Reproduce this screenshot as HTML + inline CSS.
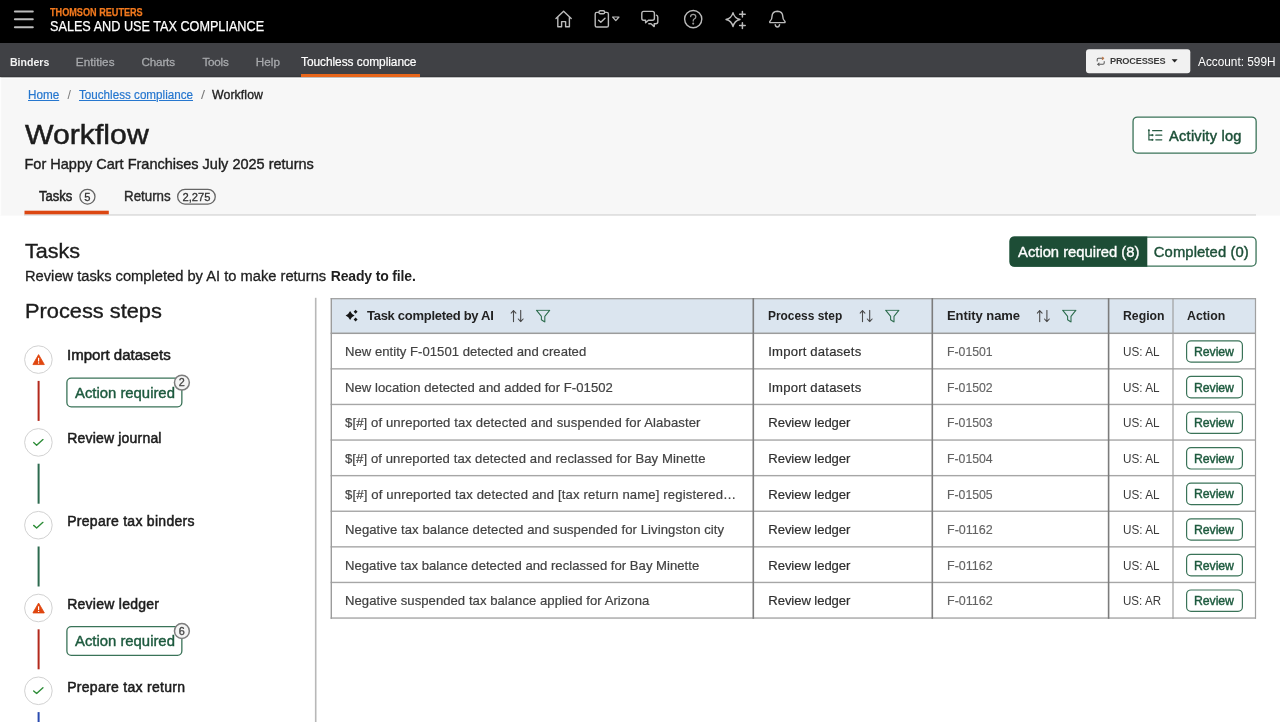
<!DOCTYPE html>
<html>
<head>
<meta charset="utf-8">
<title>Workflow</title>
<style>
*{box-sizing:border-box;margin:0;padding:0}
html,body{width:1280px;height:722px;overflow:hidden;background:#fff}
body{font-family:"Liberation Sans",sans-serif;position:relative}
.t{position:absolute;white-space:pre;font-family:"Liberation Sans",sans-serif}
.b{position:absolute;display:block}
#txt{position:absolute;left:0;top:0;width:1280px;height:722px;will-change:transform;opacity:0.999}
</style>
</head>
<body>
<svg class="b" style="left:0;top:0" width="1280" height="722" viewBox="0 0 1280 722">
<rect x="0.00" y="0.00" width="1280.00" height="43.00" fill="#000"/>
<rect x="0.00" y="43.00" width="1280.00" height="34.60" fill="#404145"/>
<rect x="0.00" y="75.80" width="1280.00" height="1.80" fill="#38393c"/>
<rect x="0.00" y="77.60" width="1280.00" height="138.00" fill="#f7f7f7"/>
<rect x="0.00" y="77.60" width="1280.00" height="1.10" fill="#fefefe"/>
<rect x="0.00" y="77.60" width="1.20" height="138.00" fill="#fdfdfd"/>
<rect x="13.90" y="10.40" width="19.90" height="2.00" rx="1.00" fill="#bdbdbd"/>
<rect x="13.90" y="18.30" width="19.90" height="2.00" rx="1.00" fill="#bdbdbd"/>
<rect x="13.90" y="26.20" width="19.90" height="2.00" rx="1.00" fill="#bdbdbd"/>
<rect x="301.00" y="74.00" width="119.00" height="3.00" fill="#e8661b"/>
<rect x="1086.00" y="49.30" width="104.30" height="24.00" rx="3.00" fill="#f1f1f1"/>
<path d="M1171.6 59.2H1177.6L1174.6 62.6Z" fill="#222" />
<rect x="79.95" y="189.35" width="15.00" height="14.70" rx="7.35" fill="#f7f7f7" stroke="#666" stroke-width="1.3"/>
<rect x="177.65" y="189.35" width="37.60" height="14.70" rx="7.35" fill="#f7f7f7" stroke="#666" stroke-width="1.3"/>
<rect x="24.00" y="214.00" width="1232.00" height="1.80" fill="#e0e0e0"/>
<rect x="24.50" y="210.70" width="84.30" height="3.60" fill="#dc4712"/>
<rect x="1133.05" y="117.05" width="123.10" height="36.10" rx="4.35" fill="#fff" stroke="#3a7358" stroke-width="1.3"/>
<rect x="1010.15" y="237.15" width="245.90" height="29.00" rx="4.35" fill="#fff" stroke="#3a7358" stroke-width="1.3"/>
<path d="M1147.3 236.5 V266.8 H1014.5 Q1009.5 266.8 1009.5 261.8 V241.5 Q1009.5 236.5 1014.5 236.5 Z" fill="#1d4d36" />
<rect x="314.90" y="297.80" width="1.60" height="425.00" fill="#b8b8b8"/>
<rect x="37.60" y="380.90" width="2.00" height="40.00" fill="#b3291c"/>
<rect x="24.60" y="345.80" width="27.60" height="27.60" rx="13.80" fill="#fff" stroke="#d2d2d2" stroke-width="1"/>
<svg x="32.3" y="354.0" width="12.6" height="11.2" viewBox="0 0 126 112"><path d="M63 6 L120 104 Q122 108 117 108 H9 Q4 108 6 104 Z" fill="#e0460f" stroke="#e0460f" stroke-width="8" stroke-linejoin="round"/><rect x="57" y="38" width="12" height="38" rx="3" fill="#fff"/><circle cx="63" cy="90" r="7" fill="#fff"/></svg>
<rect x="66.90" y="378.20" width="114.95" height="28.70" rx="4.35" fill="#fff" stroke="#3a7358" stroke-width="1.3"/>
<rect x="174.45" y="375.15" width="14.90" height="14.90" rx="7.45" fill="#f4f4f4" stroke="#7c7c7c" stroke-width="1.5"/>
<rect x="37.60" y="463.70" width="2.00" height="40.00" fill="#2c6a4f"/>
<rect x="24.60" y="428.60" width="27.60" height="27.60" rx="13.80" fill="#fff" stroke="#d2d2d2" stroke-width="1"/>
<svg x="32.6" y="438.7" width="11.4" height="7.4" viewBox="0 0 116 80"><path d="M8 42 L40 70 L108 8" fill="none" stroke="#2e8d38" stroke-width="15" stroke-linecap="round" stroke-linejoin="round"/></svg>
<rect x="37.60" y="546.50" width="2.00" height="40.00" fill="#2c6a4f"/>
<rect x="24.60" y="511.40" width="27.60" height="27.60" rx="13.80" fill="#fff" stroke="#d2d2d2" stroke-width="1"/>
<svg x="32.6" y="521.5" width="11.4" height="7.4" viewBox="0 0 116 80"><path d="M8 42 L40 70 L108 8" fill="none" stroke="#2e8d38" stroke-width="15" stroke-linecap="round" stroke-linejoin="round"/></svg>
<rect x="37.60" y="629.30" width="2.00" height="40.00" fill="#b3291c"/>
<rect x="24.60" y="594.20" width="27.60" height="27.60" rx="13.80" fill="#fff" stroke="#d2d2d2" stroke-width="1"/>
<svg x="32.3" y="602.4" width="12.6" height="11.2" viewBox="0 0 126 112"><path d="M63 6 L120 104 Q122 108 117 108 H9 Q4 108 6 104 Z" fill="#e0460f" stroke="#e0460f" stroke-width="8" stroke-linejoin="round"/><rect x="57" y="38" width="12" height="38" rx="3" fill="#fff"/><circle cx="63" cy="90" r="7" fill="#fff"/></svg>
<rect x="66.90" y="626.60" width="114.95" height="28.70" rx="4.35" fill="#fff" stroke="#3a7358" stroke-width="1.3"/>
<rect x="174.45" y="623.55" width="14.90" height="14.90" rx="7.45" fill="#f4f4f4" stroke="#7c7c7c" stroke-width="1.5"/>
<rect x="37.60" y="712.10" width="2.00" height="40.00" fill="#2a4bb0"/>
<rect x="24.60" y="677.00" width="27.60" height="27.60" rx="13.80" fill="#fff" stroke="#d2d2d2" stroke-width="1"/>
<svg x="32.6" y="687.1" width="11.4" height="7.4" viewBox="0 0 116 80"><path d="M8 42 L40 70 L108 8" fill="none" stroke="#2e8d38" stroke-width="15" stroke-linecap="round" stroke-linejoin="round"/></svg>
<rect x="331.00" y="298.30" width="925.00" height="34.80" fill="#dbe5ef"/>
<rect x="330.60" y="298.10" width="925.40" height="1.20" fill="#9c9c9c"/>
<rect x="330.60" y="332.55" width="925.40" height="1.50" fill="#9c9c9c"/>
<rect x="330.60" y="368.15" width="925.40" height="1.40" fill="#a6a6a6"/>
<rect x="330.60" y="403.75" width="925.40" height="1.40" fill="#a6a6a6"/>
<rect x="330.60" y="439.35" width="925.40" height="1.40" fill="#a6a6a6"/>
<rect x="330.60" y="474.95" width="925.40" height="1.40" fill="#a6a6a6"/>
<rect x="330.60" y="510.55" width="925.40" height="1.40" fill="#a6a6a6"/>
<rect x="330.60" y="546.15" width="925.40" height="1.40" fill="#a6a6a6"/>
<rect x="330.60" y="581.75" width="925.40" height="1.40" fill="#a6a6a6"/>
<rect x="330.60" y="617.35" width="925.40" height="1.40" fill="#a6a6a6"/>
<rect x="330.60" y="298.10" width="1.40" height="320.70" fill="#9c9c9c"/>
<rect x="752.50" y="298.10" width="1.60" height="320.70" fill="#7c7c7c"/>
<rect x="931.50" y="298.10" width="1.60" height="320.70" fill="#7c7c7c"/>
<rect x="1107.80" y="298.10" width="1.60" height="320.70" fill="#7c7c7c"/>
<rect x="1172.40" y="298.10" width="1.20" height="320.70" fill="#a0a0a0"/>
<rect x="1254.90" y="298.10" width="1.20" height="320.70" fill="#a0a0a0"/>
<path d="M350.1 311.1 Q351.45 314.25 354.6 315.6 Q351.45 316.95 350.1 320.1 Q348.75 316.95 345.6 315.6 Q348.75 314.25 350.1 311.1Z" fill="#161616" />
<path d="M355.6 309.7 Q356.50 310.80 357.6 311.7 Q356.50 312.60 355.6 313.7 Q354.70 312.60 353.6 311.7 Q354.70 310.80 355.6 309.7Z" fill="#161616" />
<path d="M355.6 317.6 Q356.50 318.70 357.6 319.6 Q356.50 320.50 355.6 321.6 Q354.70 320.50 353.6 319.6 Q354.70 318.70 355.6 317.6Z" fill="#161616" />
<svg x="510.3" y="309.8" width="14.4" height="12.6" viewBox="0 0 144 126"><g fill="none" stroke="#4a4a4a" stroke-width="11" stroke-linecap="round" stroke-linejoin="round"><path d="M32 120V8M8 34L32 8L56 34"/><path d="M104 6V118M80 92L104 118L128 92"/></g></svg>
<svg x="535.6" y="309.4" width="15" height="13.4" viewBox="0 0 150 134"><path d="M8 8H142L92 70V126L58 104V70Z" fill="none" stroke="#2f6e50" stroke-width="11" stroke-linejoin="round"/></svg>
<svg x="859.3" y="309.8" width="14.4" height="12.6" viewBox="0 0 144 126"><g fill="none" stroke="#4a4a4a" stroke-width="11" stroke-linecap="round" stroke-linejoin="round"><path d="M32 120V8M8 34L32 8L56 34"/><path d="M104 6V118M80 92L104 118L128 92"/></g></svg>
<svg x="884.8" y="309.4" width="15" height="13.4" viewBox="0 0 150 134"><path d="M8 8H142L92 70V126L58 104V70Z" fill="none" stroke="#2f6e50" stroke-width="11" stroke-linejoin="round"/></svg>
<svg x="1036.5" y="309.8" width="14.4" height="12.6" viewBox="0 0 144 126"><g fill="none" stroke="#4a4a4a" stroke-width="11" stroke-linecap="round" stroke-linejoin="round"><path d="M32 120V8M8 34L32 8L56 34"/><path d="M104 6V118M80 92L104 118L128 92"/></g></svg>
<svg x="1061.8" y="309.4" width="15" height="13.4" viewBox="0 0 150 134"><path d="M8 8H142L92 70V126L58 104V70Z" fill="none" stroke="#2f6e50" stroke-width="11" stroke-linejoin="round"/></svg>
<rect x="1186.60" y="340.80" width="55.80" height="21.40" rx="4.40" fill="#fff" stroke="#3a7358" stroke-width="1.2"/>
<rect x="1186.60" y="376.40" width="55.80" height="21.40" rx="4.40" fill="#fff" stroke="#3a7358" stroke-width="1.2"/>
<rect x="1186.60" y="412.00" width="55.80" height="21.40" rx="4.40" fill="#fff" stroke="#3a7358" stroke-width="1.2"/>
<rect x="1186.60" y="447.60" width="55.80" height="21.40" rx="4.40" fill="#fff" stroke="#3a7358" stroke-width="1.2"/>
<rect x="1186.60" y="483.20" width="55.80" height="21.40" rx="4.40" fill="#fff" stroke="#3a7358" stroke-width="1.2"/>
<rect x="1186.60" y="518.80" width="55.80" height="21.40" rx="4.40" fill="#fff" stroke="#3a7358" stroke-width="1.2"/>
<rect x="1186.60" y="554.40" width="55.80" height="21.40" rx="4.40" fill="#fff" stroke="#3a7358" stroke-width="1.2"/>
<rect x="1186.60" y="590.00" width="55.80" height="21.40" rx="4.40" fill="#fff" stroke="#3a7358" stroke-width="1.2"/>
<svg x="540" y="0" width="260" height="43" viewBox="540 0 260 43" fill="none" stroke="#bcbcbc" stroke-width="1.4" stroke-linecap="round" stroke-linejoin="round"><path d="M556 18.6 L563.6 11.2 L571.2 18.6"/><path d="M557.8 17.4 V26.8 H561.6 V21.6 H565.6 V26.8 H569.4 V17.4"/><rect x="595.2" y="12.4" width="13.2" height="14.6" rx="1.6"/><rect x="599" y="10.8" width="5.6" height="3" rx="1.3" fill="#000"/><path d="M598.6 20.2 L600.8 22.2 L605 18.2"/><path d="M612.6 17 H619 L615.8 20.6 Z" stroke-width="1.2"/><path d="M643.6 11.4 H652.4 Q654.4 11.4 654.4 13.4 V18.2 Q654.4 20.2 652.4 20.2 H648.4 L645.6 22.8 V20.2 H643.6 Q641.8 20.2 641.8 18.2 V13.4 Q641.8 11.4 643.6 11.4 Z"/><path d="M656.4 15.2 Q657.8 15.6 657.8 17.2 V21.8 Q657.8 23.8 655.8 23.8 H654.2 V26.6 L651 23.8 H648.8"/><circle cx="693.2" cy="19.1" r="8.6"/><path d="M690.6 16.6 Q690.7 14.4 693.2 14.4 Q695.8 14.4 695.8 16.7 Q695.8 18.2 694.2 19 Q693.2 19.6 693.2 21" stroke-width="1.3" stroke="#9a9a9a"/><circle cx="693.2" cy="23.6" r="0.5" stroke="#9a9a9a" stroke-width="1.1"/><path d="M733 12.6 Q734.4 18.2 740 19.5 Q734.4 20.8 733 26.6 Q731.6 20.8 726 19.5 Q731.6 18.2 733 12.6 Z" stroke-width="1.4"/><path d="M742.4 11.4 V17 M739.6 14.2 H745.2" stroke-width="1.5"/><path d="M742.4 22.8 V28.4 M739.6 25.6 H745.2" stroke-width="1.5"/><path d="M770 22.6 H784.8 Q785.6 22 784.6 21 Q782.8 19.4 782.8 16.4 Q782.6 11.4 777.4 11.2 Q772.2 11.4 772 16.4 Q772 19.4 770.2 21 Q769.2 22 770 22.6 Z"/><path d="M775.2 24.6 Q775.6 27 777.4 27 Q779.2 27 779.6 24.6"/></svg>
<svg x="1096" y="56.6" width="9.4" height="9.4" viewBox="0 0 110 110" fill="none" stroke="#5a5a5a" stroke-width="12" stroke-linecap="round" stroke-linejoin="round"><path d="M14 52 V34 Q14 20 28 20 H86"/><path d="M74 6 L90 20 L74 34" stroke="#c77a45"/><path d="M96 58 V76 Q96 90 82 90 H24"/><path d="M36 76 L20 90 L36 104"/></svg>
<svg x="1146" y="128" width="18" height="15" viewBox="1146 128 18 15" fill="none" stroke="#2a5d45" stroke-width="1.2" stroke-linecap="round"><path d="M1148.9 130.4 V139.8 H1151.6 M1148.9 135.2 H1151.6"/><circle cx="1148.9" cy="130.2" r="1" fill="#2a5d45" stroke="none"/><circle cx="1152.4" cy="135.2" r="1.1" fill="#2a5d45" stroke="none"/><circle cx="1152.4" cy="139.8" r="1.1" fill="#2a5d45" stroke="none"/><path d="M1152.6 130.7 H1161.8 M1155.8 135.2 H1161.8 M1155.8 139.8 H1161.8"/></svg>
</svg>
<div id="txt">
<div class="t" style="left:50.40px;top:7.00px;font-size:10.6px;line-height:10.6px;color:#f37a1f;font-weight:700;transform:scaleX(0.8606);transform-origin:0 0;-webkit-text-stroke:0.25px #f37a1f">THOMSON REUTERS</div>
<div class="t" style="left:50.40px;top:19.00px;font-size:14px;line-height:14px;color:#ffffff;transform:scaleX(0.9042);transform-origin:0 0;-webkit-text-stroke:0.25px #fff">SALES AND USE TAX COMPLIANCE</div>
<div class="t" style="left:10.00px;top:56.00px;font-size:11.7px;line-height:11.7px;color:#f4f4f4;font-weight:700;transform:scaleX(0.9031);transform-origin:0 0;">Binders</div>
<div class="t" style="left:75.80px;top:56.00px;font-size:11.7px;line-height:11.7px;color:#a8aaad;letter-spacing:0.053px;-webkit-text-stroke:0.3px #a8aaad">Entities</div>
<div class="t" style="left:141.50px;top:56.00px;font-size:11.7px;line-height:11.7px;color:#a8aaad;letter-spacing:-0.188px;-webkit-text-stroke:0.3px #a8aaad">Charts</div>
<div class="t" style="left:202.50px;top:56.00px;font-size:11.7px;line-height:11.7px;color:#a8aaad;letter-spacing:-0.249px;-webkit-text-stroke:0.3px #a8aaad">Tools</div>
<div class="t" style="left:255.80px;top:56.00px;font-size:11.7px;line-height:11.7px;color:#a8aaad;letter-spacing:0.051px;-webkit-text-stroke:0.3px #a8aaad">Help</div>
<div class="t" style="left:301.00px;top:57.00px;font-size:11.9px;line-height:11.9px;color:#ffffff;letter-spacing:-0.044px;-webkit-text-stroke:0.2px #fff">Touchless compliance</div>
<div class="t" style="left:1110.00px;top:57.00px;font-size:9.2px;line-height:9.2px;color:#3a3a3a;font-weight:700;letter-spacing:-0.198px;">PROCESSES</div>
<div class="t" style="left:1197.60px;top:56.00px;font-size:12.5px;line-height:12.5px;color:#ffffff;transform:scaleX(0.9451);transform-origin:0 0;">Account: 599H</div>
<div class="t" style="left:28.00px;top:89.00px;font-size:12.3px;line-height:12.3px;color:#2677cf;transform:scaleX(0.9509);transform-origin:0 0;text-decoration:underline;-webkit-text-stroke:0.2px #2677cf">Home</div>
<div class="t" style="left:67.50px;top:89.00px;font-size:12.3px;line-height:12.3px;color:#7a7a7a;letter-spacing:0.078px;">/</div>
<div class="t" style="left:79.00px;top:89.00px;font-size:12.3px;line-height:12.3px;color:#2677cf;transform:scaleX(0.9477);transform-origin:0 0;text-decoration:underline;-webkit-text-stroke:0.2px #2677cf">Touchless compliance</div>
<div class="t" style="left:201.00px;top:89.00px;font-size:12.3px;line-height:12.3px;color:#7a7a7a;transform:scaleX(1.1689);transform-origin:0 0;">/</div>
<div class="t" style="left:212.00px;top:89.00px;font-size:12.3px;line-height:12.3px;color:#1f1f1f;letter-spacing:0.094px;-webkit-text-stroke:0.35px #1f1f1f">Workflow</div>
<div class="t" style="left:25.00px;top:121.00px;font-size:27.8px;line-height:27.8px;color:#1c1c1c;transform:scaleX(1.0872);transform-origin:0 0;-webkit-text-stroke:0.5px #1c1c1c">Workflow</div>
<div class="t" style="left:24.50px;top:157.00px;font-size:14.5px;line-height:14.5px;color:#1f1f1f;-webkit-text-stroke:0.4px #1f1f1f">For Happy Cart Franchises July 2025 returns</div>
<div class="t" style="left:39.40px;top:189.00px;font-size:14px;line-height:14px;color:#1f1f1f;transform:scaleX(0.9302);transform-origin:0 0;-webkit-text-stroke:0.5px #1f1f1f">Tasks</div>
<div class="t" style="left:84.30px;top:192.00px;font-size:11.2px;line-height:11.2px;color:#333;-webkit-text-stroke:0.3px #333">5</div>
<div class="t" style="left:123.70px;top:189.00px;font-size:14px;line-height:14px;color:#2a2a2a;transform:scaleX(0.9525);transform-origin:0 0;-webkit-text-stroke:0.4px #2a2a2a">Returns</div>
<div class="t" style="left:182.40px;top:192.00px;font-size:11.2px;line-height:11.2px;color:#333;letter-spacing:0.025px;-webkit-text-stroke:0.3px #333">2,275</div>
<div class="t" style="left:1169.10px;top:129.00px;font-size:14.6px;line-height:14.6px;color:#1d5038;letter-spacing:0.232px;-webkit-text-stroke:0.45px #1d5038">Activity log</div>
<div class="t" style="left:24.70px;top:241.00px;font-size:20.2px;line-height:20.2px;color:#1c1c1c;transform:scaleX(1.0676);transform-origin:0 0;-webkit-text-stroke:0.35px #1c1c1c">Tasks</div>
<div class="t" style="left:24.70px;top:269.00px;font-size:14px;line-height:14px;color:#1f1f1f;transform:scaleX(1.0490);transform-origin:0 0;-webkit-text-stroke:0.3px #1f1f1f">Review tasks completed by AI to make returns</div>
<div class="t" style="left:330.70px;top:269.00px;font-size:14px;line-height:14px;color:#1f1f1f;font-weight:700;letter-spacing:-0.157px;">Ready to file.</div>
<div class="t" style="left:1018.10px;top:245.00px;font-size:14.8px;line-height:14.8px;color:#ffffff;letter-spacing:-0.024px;-webkit-text-stroke:0.35px #fff">Action required (8)</div>
<div class="t" style="left:1153.80px;top:245.00px;font-size:14.8px;line-height:14.8px;color:#1d5038;letter-spacing:0.095px;-webkit-text-stroke:0.4px #1d5038">Completed (0)</div>
<div class="t" style="left:24.70px;top:301.00px;font-size:20.4px;line-height:20.4px;color:#1c1c1c;transform:scaleX(1.0690);transform-origin:0 0;-webkit-text-stroke:0.35px #1c1c1c">Process steps</div>
<div class="t" style="left:67.20px;top:348.00px;font-size:14px;line-height:14px;color:#1c1c1c;transform:scaleX(1.0746);transform-origin:0 0;-webkit-text-stroke:0.5px #1c1c1c">Import datasets</div>
<div class="t" style="left:74.70px;top:386.00px;font-size:14.2px;line-height:14.2px;color:#1d5a3e;transform:scaleX(1.0468);transform-origin:0 0;-webkit-text-stroke:0.4px #1d5a3e">Action required</div>
<div class="t" style="left:178.80px;top:377.00px;font-size:10.8px;line-height:10.8px;color:#484848;-webkit-text-stroke:0.35px #484848">2</div>
<div class="t" style="left:67.20px;top:431.00px;font-size:14px;line-height:14px;color:#1c1c1c;letter-spacing:0.190px;-webkit-text-stroke:0.5px #1c1c1c">Review journal</div>
<div class="t" style="left:67.20px;top:514.00px;font-size:14px;line-height:14px;color:#1c1c1c;letter-spacing:0.284px;-webkit-text-stroke:0.5px #1c1c1c">Prepare tax binders</div>
<div class="t" style="left:67.20px;top:597.00px;font-size:14px;line-height:14px;color:#1c1c1c;letter-spacing:0.257px;-webkit-text-stroke:0.5px #1c1c1c">Review ledger</div>
<div class="t" style="left:74.70px;top:634.00px;font-size:14.2px;line-height:14.2px;color:#1d5a3e;transform:scaleX(1.0468);transform-origin:0 0;-webkit-text-stroke:0.4px #1d5a3e">Action required</div>
<div class="t" style="left:178.80px;top:626.00px;font-size:10.8px;line-height:10.8px;color:#484848;-webkit-text-stroke:0.35px #484848">6</div>
<div class="t" style="left:67.20px;top:680.00px;font-size:14px;line-height:14px;color:#1c1c1c;letter-spacing:0.292px;-webkit-text-stroke:0.5px #1c1c1c">Prepare tax return</div>
<div class="t" style="left:367.00px;top:309.00px;font-size:13px;line-height:13px;color:#222;font-weight:700;letter-spacing:-0.284px;">Task completed by AI</div>
<div class="t" style="left:768.30px;top:309.00px;font-size:13px;line-height:13px;color:#222;font-weight:700;transform:scaleX(0.9168);transform-origin:0 0;">Process step</div>
<div class="t" style="left:947.00px;top:309.00px;font-size:13px;line-height:13px;color:#222;font-weight:700;letter-spacing:-0.059px;">Entity name</div>
<div class="t" style="left:1123.00px;top:309.00px;font-size:13px;line-height:13px;color:#222;font-weight:700;transform:scaleX(0.9418);transform-origin:0 0;">Region</div>
<div class="t" style="left:1187.00px;top:309.00px;font-size:13px;line-height:13px;color:#222;font-weight:700;transform:scaleX(0.9468);transform-origin:0 0;">Action</div>
<div class="t" style="left:345.00px;top:345.00px;font-size:13.1px;line-height:13.1px;color:#424242;letter-spacing:0.026px;-webkit-text-stroke:0.2px #424242">New entity F-01501 detected and created</div>
<div class="t" style="left:768.30px;top:345.00px;font-size:13.1px;line-height:13.1px;color:#303030;letter-spacing:0.189px;-webkit-text-stroke:0.2px #303030">Import datasets</div>
<div class="t" style="left:946.80px;top:345.00px;font-size:13.1px;line-height:13.1px;color:#636363;transform:scaleX(0.9368);transform-origin:0 0;-webkit-text-stroke:0.15px #636363">F-01501</div>
<div class="t" style="left:1123.20px;top:345.00px;font-size:13.1px;line-height:13.1px;color:#3a3a3a;transform:scaleX(0.8954);transform-origin:0 0;">US: AL</div>
<div class="t" style="left:1194.00px;top:346.00px;font-size:12.3px;line-height:12.3px;color:#1d5a3e;letter-spacing:-0.066px;-webkit-text-stroke:0.4px #1d5a3e">Review</div>
<div class="t" style="left:345.00px;top:381.00px;font-size:13.1px;line-height:13.1px;color:#424242;letter-spacing:0.052px;-webkit-text-stroke:0.2px #424242">New location detected and added for F-01502</div>
<div class="t" style="left:768.30px;top:381.00px;font-size:13.1px;line-height:13.1px;color:#303030;letter-spacing:0.189px;-webkit-text-stroke:0.2px #303030">Import datasets</div>
<div class="t" style="left:946.80px;top:381.00px;font-size:13.1px;line-height:13.1px;color:#636363;transform:scaleX(0.9368);transform-origin:0 0;-webkit-text-stroke:0.15px #636363">F-01502</div>
<div class="t" style="left:1123.20px;top:381.00px;font-size:13.1px;line-height:13.1px;color:#3a3a3a;transform:scaleX(0.8954);transform-origin:0 0;">US: AL</div>
<div class="t" style="left:1194.00px;top:382.00px;font-size:12.3px;line-height:12.3px;color:#1d5a3e;letter-spacing:-0.066px;-webkit-text-stroke:0.4px #1d5a3e">Review</div>
<div class="t" style="left:345.00px;top:416.00px;font-size:13.1px;line-height:13.1px;color:#424242;letter-spacing:0.117px;-webkit-text-stroke:0.2px #424242">$[#] of unreported tax detected and suspended for Alabaster</div>
<div class="t" style="left:768.30px;top:416.00px;font-size:13.1px;line-height:13.1px;color:#303030;letter-spacing:-0.072px;-webkit-text-stroke:0.2px #303030">Review ledger</div>
<div class="t" style="left:946.80px;top:416.00px;font-size:13.1px;line-height:13.1px;color:#636363;transform:scaleX(0.9368);transform-origin:0 0;-webkit-text-stroke:0.15px #636363">F-01503</div>
<div class="t" style="left:1123.20px;top:416.00px;font-size:13.1px;line-height:13.1px;color:#3a3a3a;transform:scaleX(0.8954);transform-origin:0 0;">US: AL</div>
<div class="t" style="left:1194.00px;top:417.00px;font-size:12.3px;line-height:12.3px;color:#1d5a3e;letter-spacing:-0.066px;-webkit-text-stroke:0.4px #1d5a3e">Review</div>
<div class="t" style="left:345.00px;top:452.00px;font-size:13.1px;line-height:13.1px;color:#424242;letter-spacing:0.087px;-webkit-text-stroke:0.2px #424242">$[#] of unreported tax detected and reclassed for Bay Minette</div>
<div class="t" style="left:768.30px;top:452.00px;font-size:13.1px;line-height:13.1px;color:#303030;letter-spacing:-0.072px;-webkit-text-stroke:0.2px #303030">Review ledger</div>
<div class="t" style="left:946.80px;top:452.00px;font-size:13.1px;line-height:13.1px;color:#636363;transform:scaleX(0.9368);transform-origin:0 0;-webkit-text-stroke:0.15px #636363">F-01504</div>
<div class="t" style="left:1123.20px;top:452.00px;font-size:13.1px;line-height:13.1px;color:#3a3a3a;transform:scaleX(0.8954);transform-origin:0 0;">US: AL</div>
<div class="t" style="left:1194.00px;top:453.00px;font-size:12.3px;line-height:12.3px;color:#1d5a3e;letter-spacing:-0.066px;-webkit-text-stroke:0.4px #1d5a3e">Review</div>
<div class="t" style="left:345.00px;top:488.00px;font-size:13.1px;line-height:13.1px;color:#424242;letter-spacing:0.153px;-webkit-text-stroke:0.2px #424242">$[#] of unreported tax detected and [tax return name] registered…</div>
<div class="t" style="left:768.30px;top:488.00px;font-size:13.1px;line-height:13.1px;color:#303030;letter-spacing:-0.072px;-webkit-text-stroke:0.2px #303030">Review ledger</div>
<div class="t" style="left:946.80px;top:488.00px;font-size:13.1px;line-height:13.1px;color:#636363;transform:scaleX(0.9368);transform-origin:0 0;-webkit-text-stroke:0.15px #636363">F-01505</div>
<div class="t" style="left:1123.20px;top:488.00px;font-size:13.1px;line-height:13.1px;color:#3a3a3a;transform:scaleX(0.8954);transform-origin:0 0;">US: AL</div>
<div class="t" style="left:1194.00px;top:488.00px;font-size:12.3px;line-height:12.3px;color:#1d5a3e;letter-spacing:-0.066px;-webkit-text-stroke:0.4px #1d5a3e">Review</div>
<div class="t" style="left:345.00px;top:523.00px;font-size:13.1px;line-height:13.1px;color:#424242;letter-spacing:0.080px;-webkit-text-stroke:0.2px #424242">Negative tax balance detected and suspended for Livingston city</div>
<div class="t" style="left:768.30px;top:523.00px;font-size:13.1px;line-height:13.1px;color:#303030;letter-spacing:-0.072px;-webkit-text-stroke:0.2px #303030">Review ledger</div>
<div class="t" style="left:946.80px;top:523.00px;font-size:13.1px;line-height:13.1px;color:#636363;transform:scaleX(0.9561);transform-origin:0 0;-webkit-text-stroke:0.15px #636363">F-01162</div>
<div class="t" style="left:1123.20px;top:523.00px;font-size:13.1px;line-height:13.1px;color:#3a3a3a;transform:scaleX(0.8954);transform-origin:0 0;">US: AL</div>
<div class="t" style="left:1194.00px;top:524.00px;font-size:12.3px;line-height:12.3px;color:#1d5a3e;letter-spacing:-0.066px;-webkit-text-stroke:0.4px #1d5a3e">Review</div>
<div class="t" style="left:345.00px;top:559.00px;font-size:13.1px;line-height:13.1px;color:#424242;letter-spacing:0.020px;-webkit-text-stroke:0.2px #424242">Negative tax balance detected and reclassed for Bay Minette</div>
<div class="t" style="left:768.30px;top:559.00px;font-size:13.1px;line-height:13.1px;color:#303030;letter-spacing:-0.072px;-webkit-text-stroke:0.2px #303030">Review ledger</div>
<div class="t" style="left:946.80px;top:559.00px;font-size:13.1px;line-height:13.1px;color:#636363;transform:scaleX(0.9561);transform-origin:0 0;-webkit-text-stroke:0.15px #636363">F-01162</div>
<div class="t" style="left:1123.20px;top:559.00px;font-size:13.1px;line-height:13.1px;color:#3a3a3a;transform:scaleX(0.8954);transform-origin:0 0;">US: AL</div>
<div class="t" style="left:1194.00px;top:560.00px;font-size:12.3px;line-height:12.3px;color:#1d5a3e;letter-spacing:-0.066px;-webkit-text-stroke:0.4px #1d5a3e">Review</div>
<div class="t" style="left:345.00px;top:594.00px;font-size:13.1px;line-height:13.1px;color:#424242;letter-spacing:0.045px;-webkit-text-stroke:0.2px #424242">Negative suspended tax balance applied for Arizona</div>
<div class="t" style="left:768.30px;top:594.00px;font-size:13.1px;line-height:13.1px;color:#303030;letter-spacing:-0.072px;-webkit-text-stroke:0.2px #303030">Review ledger</div>
<div class="t" style="left:946.80px;top:594.00px;font-size:13.1px;line-height:13.1px;color:#636363;transform:scaleX(0.9561);transform-origin:0 0;-webkit-text-stroke:0.15px #636363">F-01162</div>
<div class="t" style="left:1123.20px;top:594.00px;font-size:13.1px;line-height:13.1px;color:#3a3a3a;transform:scaleX(0.8850);transform-origin:0 0;">US: AR</div>
<div class="t" style="left:1194.00px;top:595.00px;font-size:12.3px;line-height:12.3px;color:#1d5a3e;letter-spacing:-0.066px;-webkit-text-stroke:0.4px #1d5a3e">Review</div>
</div>
</body>
</html>
